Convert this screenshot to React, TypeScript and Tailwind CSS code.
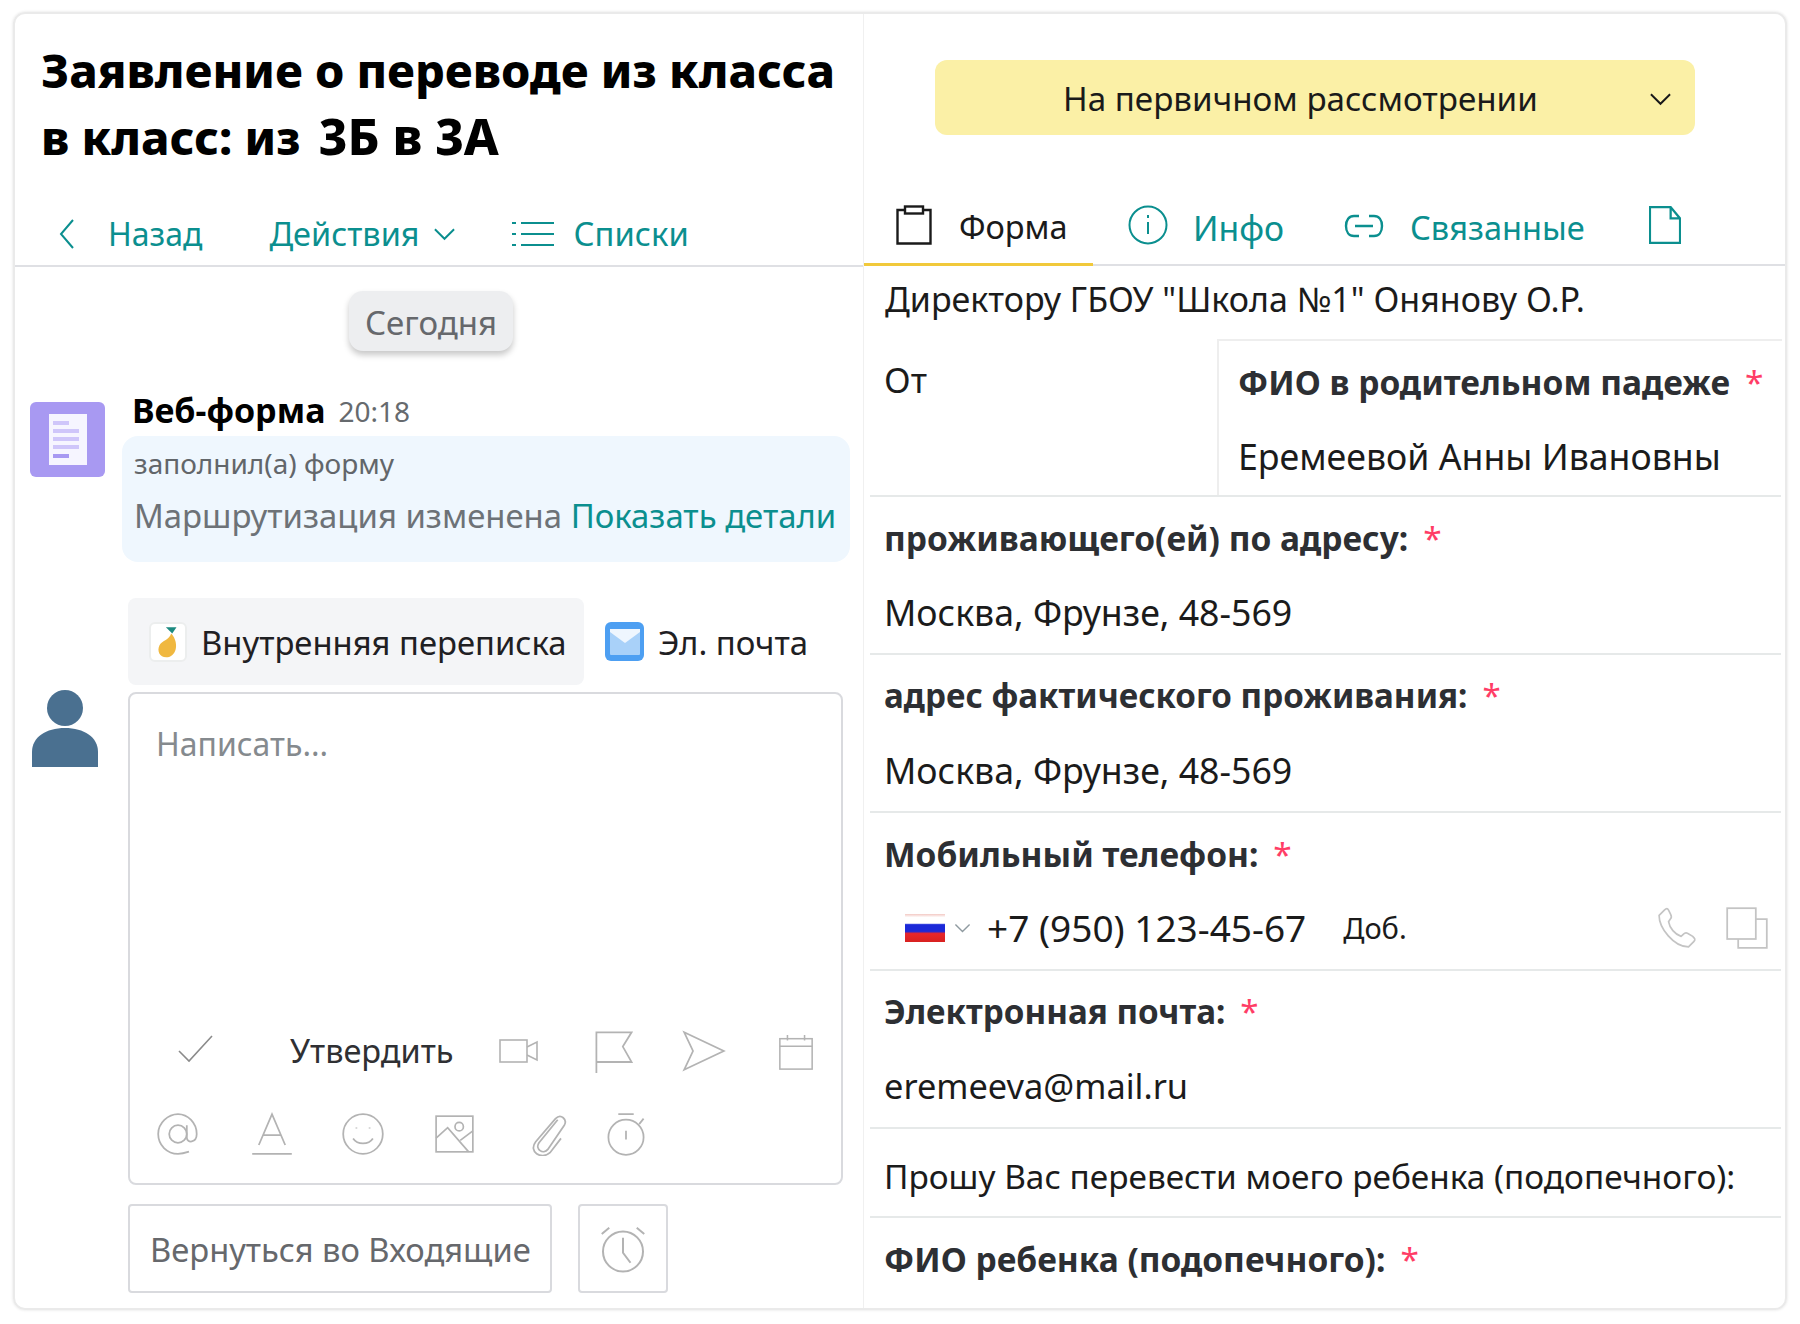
const font = "font-['Noto_Sans','Liberation_Sans',sans-serif]";

function Icon({ className, children }: { className: string; children: React.ReactNode }) {
  return (
    <svg
      viewBox="0 0 40 40"
      fill="none"
      stroke="currentColor"
      strokeWidth={1.6}
      className={`shrink-0 ${className}`}
    >
      {children}
    </svg>
  );
}

function Chevron({ className }: { className: string }) {
  return (
    <svg viewBox="0 0 24 14" fill="none" stroke="currentColor" strokeWidth={2} className={`shrink-0 ${className}`}>
      <path d="M2 2l10 10L22 2" />
    </svg>
  );
}

function Field({
  label,
  value,
  labelSize = "text-[33.5px]",
  valueSize = "text-[35.7px]",
}: {
  label: string;
  value: string;
  labelSize?: string;
  valueSize?: string;
}) {
  return (
    <div className="h-[158px] border-b-2 border-[#e6e9e9] pl-[14px] pr-[13px] flex flex-col">
      <Label text={label} size={labelSize} />
      <div className={`mt-[26px] leading-[48px] text-[#1b1b1b] ${valueSize}`}>{value}</div>
    </div>
  );
}

function Label({ text, size = "text-[33.5px]" }: { text: string; size?: string }) {
  return (
    <div className={`mt-[17px] h-[48px] flex items-start leading-[48px] font-bold text-[#2d2f33] ${size}`}>
      {text}
      <span className="ml-[15px] font-normal text-[#ff3d66]">*</span>
    </div>
  );
}

function LeftPane() {
  return (
    <div className="w-[848px] shrink-0 flex flex-col">
      <h1 className="h-[183px] pt-[23px] pl-[26px] text-[46.9px] leading-[66px] font-extrabold text-black whitespace-nowrap">
        Заявление о переводе из класса
        <br />в класс: из <span className="ml-[6px] text-[49.5px]">3Б в 3А</span>
      </h1>

      <div className="h-[70px] pt-[6px] border-b-2 border-[#dfe0e4] flex items-center text-[32px] text-[#0b8f8f] pl-[44px]">
        <svg viewBox="0 0 16 30" fill="none" stroke="currentColor" strokeWidth={2} className="w-[16px] h-[30px] shrink-0">
          <path d="M14 1L2 15l12 14" />
        </svg>
        <span className="ml-[33px]">Назад</span>
        <span className="ml-[67px] text-[32.5px]">Действия</span>
        <Chevron className="w-[23px] h-[14px] ml-[13px]" />
        <svg viewBox="0 0 42 28" fill="none" stroke="currentColor" strokeWidth={2} className="w-[42px] h-[28px] ml-[56px] shrink-0">
          <path d="M0 3h4M0 14h4M0 25h4M9 3h33M9 14h33M9 25h33" />
        </svg>
        <span className="ml-[20px] text-[32.8px]">Списки</span>
      </div>

      <div className="flex justify-center mt-[24px] pr-[16px]">
        <div className="h-[60px] px-[16px] pt-[3px] flex items-center rounded-[14px] bg-[#edeef0] text-[33px] text-[#66686c] shadow-[0_4px_6px_rgba(0,0,0,0.22)]">
          Сегодня
        </div>
      </div>

      <div className="flex mt-[51px] pl-[15px]">
        <svg viewBox="0 0 75 75" className="w-[75px] h-[75px] shrink-0">
          <rect width="75" height="75" rx="6" fill="#a899f2" />
          <rect x="19" y="12" width="38" height="51" fill="#f6f5ff" />
          <rect x="23" y="19" width="16" height="4" fill="#cfc6fa" />
          <rect x="23" y="27" width="26" height="4" fill="#cfc6fa" />
          <rect x="23" y="35" width="26" height="4" fill="#cfc6fa" />
          <rect x="23" y="43" width="26" height="4" fill="#cfc6fa" />
          <rect x="23" y="52" width="16" height="4" fill="#a899f2" />
        </svg>
        <div className="ml-[17px] w-[728px]">
          <div className="h-[17px] mb-[17px] flex items-center pl-[10px]">
            <span className="text-[34px] font-bold text-black">Веб-форма</span>
            <span className="ml-[13px] text-[28px] text-[#666a6e]">20:18</span>
          </div>
          <div className="h-[126px] rounded-[16px] bg-[#eff7fe] pl-[12px] pt-[7px]">
            <div className="text-[28px] leading-[40px] text-[#62666a]">заполнил(а) форму</div>
            <div className="mt-[9px] text-[32.9px] leading-[48px] text-[#6d7277] whitespace-nowrap">
              Маршрутизация изменена <span className="text-[#0b8f8f]">Показать детали</span>
            </div>
          </div>
        </div>
      </div>

      <div className="flex mt-[36px] pl-[17px]">
        <div className="w-[66px] h-[77px] mt-[92px] shrink-0">
          <svg viewBox="0 0 66 77" className="w-[66px] h-[77px]">
            <ellipse cx="33" cy="18" rx="18" ry="18" fill="#4a7090" />
            <path d="M0 77V62C0 47 14 38 33 38s33 9 33 24v15z" fill="#4a7090" />
          </svg>
        </div>
        <div className="ml-[30px] w-[715px]">
          <div className="flex items-center h-[87px]">
            <div className="w-[456px] h-[87px] rounded-[8px] bg-[#f4f5f7] flex items-center pl-[21px]">
              <div className="w-[38px] h-[40px] rounded-[6px] border-2 border-[#eceeee] bg-white flex items-center justify-center">
                <svg viewBox="0 0 24 32" className="w-[26px] h-[34px]">
                  <path d="M15 8c6 6 7 19-2 22C5 32 1 25 4 19c2-4 9-5 11-11z" fill="#f0b840" />
                  <path d="M10 2h10l-4 6z" fill="#1c8a80" />
                </svg>
              </div>
              <span className="ml-[14px] pt-[2px] text-[32.8px] text-[#1f2023] whitespace-nowrap">Внутренняя переписка</span>
            </div>
            <div className="ml-[21px] w-[39px] h-[39px] rounded-[6px] bg-[#4d9ff2] flex items-center justify-center">
              <svg viewBox="0 0 30 26" className="w-[30px] h-[26px]">
                <rect width="30" height="26" rx="1" fill="#a9d1f9" />
                <path d="M0 0h30v3L15 14 0 3z" fill="#eff6fe" />
              </svg>
            </div>
            <span className="ml-[14px] pt-[2px] text-[33px] text-[#1f2023] whitespace-nowrap">Эл. почта</span>
          </div>

          <div className="mt-[7px] h-[493px] border-2 border-[#d9dade] rounded-[8px] flex flex-col pl-[26px]">
            <div className="mt-[26px] h-[48px] text-[32px] leading-[48px] text-[#858a8e]">Написать...</div>
            <div className="mt-[260px] flex items-center h-[46px] text-[#b3b3b3]">
              <Icon className="w-[40px] h-[40px] ml-[20px] text-[#8b8b8b]">
                <path d="M3 20l10 10L36 5" />
              </Icon>
              <span className="ml-[74px] w-[162px] text-[32.5px] text-[#2f3033] whitespace-nowrap">Утвердить</span>
              <Icon className="w-[46px] h-[40px] ml-[44px]">
                <rect x="1" y="9" width="27" height="22" />
                <path d="M28 16l10-5v18l-10-5" />
              </Icon>
              <Icon className="w-[44px] h-[44px] ml-[50px]">
                <path d="M4 40V3h32l-8 13 8 14H4" />
              </Icon>
              <Icon className="w-[44px] h-[44px] ml-[46px]">
                <path d="M2 3l36 17L2 37l8-17z" />
              </Icon>
              <Icon className="w-[42px] h-[38px] ml-[49px] mt-[2px]">
                <rect x="3" y="6" width="34" height="32" />
                <path d="M3 14h34M11 2v6M29 2v6" />
              </Icon>
            </div>
            <div className="mt-[37px] flex items-center h-[46px] text-[#b3b3b3]">
              <Icon className="w-[44px] h-[44px]">
                <circle cx="20" cy="20" r="8" />
                <path d="M28 12v11c0 6 9 5 9-3 0-10-8-18-17-18S2 10 2 20s8 18 18 18c4 0 7-1 10-2" />
              </Icon>
              <Icon className="w-[44px] h-[44px] ml-[50px]">
                <path d="M8 30L20 2l12 28M12 21h16M2 38h36" />
              </Icon>
              <Icon className="w-[44px] h-[44px] ml-[47px]">
                <circle cx="20" cy="20" r="18" />
                <path d="M11 24c4 6 14 6 18 0M14 14v1M26 14v1" />
              </Icon>
              <Icon className="w-[42px] h-[44px] ml-[49px]">
                <rect x="2" y="3" width="35" height="34" />
                <circle cx="24" cy="13" r="4" />
                <path d="M2 24l11-10 20 23M25 26l12-9" />
              </Icon>
              <Icon className="w-[44px] h-[44px] ml-[52px]">
                <path d="M27 7L10 28c-4 6 4 11 8 6L33 12c3-5-3-11-8-6L7 27c-7 9 5 17 13 10l10-13" />
              </Icon>
              <Icon className="w-[44px] h-[44px] ml-[32px]">
                <circle cx="20" cy="23" r="16" />
                <path d="M13 2h14M20 17v8M32 11l4-5" />
              </Icon>
            </div>
          </div>

          <div className="flex mt-[19px]">
            <div className="w-[424px] h-[89px] pt-[2px] border-2 border-[#d9dade] rounded-[4px] flex items-center pl-[20px] text-[32.7px] text-[#66686c] whitespace-nowrap">
              Вернуться во Входящие
            </div>
            <div className="ml-[26px] w-[90px] h-[89px] border-2 border-[#d9dade] rounded-[4px] flex items-center justify-center text-[#b3b3b3]">
              <Icon className="w-[50px] h-[50px]">
                <circle cx="20" cy="22" r="16" />
                <path d="M20 11v12l6 8M3 8l6-5M37 8l-6-5" />
              </Icon>
            </div>
          </div>
        </div>
      </div>
    </div>
  );
}

function RightPane() {
  return (
    <div className="flex-1 min-w-0 border-l border-[#f0f0f0] flex flex-col">
      <div className="h-[183px] flex items-start pl-[71px] pt-[46px]">
        <div className="w-[760px] h-[75px] pt-[3px] rounded-[12px] bg-[#fbf0a6] flex items-center text-[33.2px] text-[#1a1a1a]">
          <span className="ml-[128px]">На первичном рассмотрении</span>
          <Chevron className="w-[23px] h-[14px] ml-auto mr-[23px]" />
        </div>
      </div>

      <div className="h-[70px] border-b-2 border-[#dfe0e4] flex text-[33px] text-[#0b8f8f] -mt-[1px]">
        <div className="w-[229px] h-[70px] border-b-[3px] border-[#f1c93b] flex items-center text-[#1a1a1a] pl-[32px] -mb-[1px]">
          <svg viewBox="0 0 36 40" fill="none" stroke="currentColor" strokeWidth={2.4} className="w-[36px] h-[40px] -mt-[10px] shrink-0">
            <path d="M9 5H1.5v33.5h33V5H27" />
            <rect x="9" y="1.5" width="18" height="7" />
          </svg>
          <span className="ml-[27px] -mt-[4px] text-[32.5px]">Форма</span>
        </div>
        <div className="flex items-center pl-[35px] -mt-[4px]">
          <svg viewBox="0 0 40 40" fill="none" stroke="currentColor" strokeWidth={2} className="w-[40px] h-[40px] -mt-[6px] shrink-0">
            <circle cx="20" cy="20" r="18.5" />
            <path d="M20 17v12M20 10v3" />
          </svg>
          <span className="ml-[25px] text-[33.7px]">Инфо</span>
          <svg viewBox="0 0 40 24" fill="none" stroke="currentColor" strokeWidth={2.4} className="w-[40px] h-[24px] ml-[60px] -mt-[4px] shrink-0">
            <path d="M15 2H10C5 2 2 6 2 12s3 10 8 10h5M25 2h5c5 0 8 4 8 10s-3 10-8 10h-5M11 12h18" />
          </svg>
          <span className="ml-[26px] text-[32.6px]">Связанные</span>
          <svg viewBox="0 0 34 40" fill="none" stroke="currentColor" strokeWidth={2.4} className="w-[32px] h-[38px] ml-[64px] -mt-[6px] shrink-0">
            <path d="M1 1h22l10 12v26H1zM23 1v12h10" />
          </svg>
        </div>
      </div>

      <div className="h-[73px] pl-[21px] pt-[9px] text-[34px] leading-[48px] text-[#1b1b1b] whitespace-nowrap">
        Директору ГБОУ "Школа №1" Онянову О.Р.
      </div>

      <div className="ml-[6px] mr-[4px]">
        <div className="h-[158px] border-b-2 border-[#e6e9e9] flex">
          <div className="w-[347px] pl-[14px] pt-[17px] text-[35px] leading-[48px] text-[#1b1b1b]">От</div>
          <div className="flex-1 border-l-2 border-t-2 border-[#eeeeee] pl-[19px] -mr-[1px]">
            <Label text="ФИО в родительном падеже" />
            <div className="mt-[26px] text-[35.7px] leading-[48px] text-[#1b1b1b]">Еремеевой Анны Ивановны</div>
          </div>
        </div>
        <Field label="проживающего(ей) по адресу:" value="Москва, Фрунзе, 48-569" />
        <Field label="адрес фактического проживания:" labelSize="text-[33.2px]" value="Москва, Фрунзе, 48-569" />

        <div className="h-[158px] border-b-2 border-[#e6e9e9] pl-[14px] pr-[13px] flex flex-col">
          <Label text="Мобильный телефон:" />
          <div className="mt-[26px] h-[48px] flex items-center text-[37px] text-[#1b1b1b] whitespace-nowrap">
            <div className="ml-[21px] w-[40px] h-[28px] bg-[linear-gradient(#f3c9c4_0%,#ffffff_12%,#ffffff_33%,#1b29d8_38%,#1b29d8_62%,#e8262b_70%,#d8211f_100%)]" />
            <Chevron className="w-[17px] h-[10px] ml-[9px] text-[#8f9aa0]" />
            <span className="ml-[16px]">+7 (950) 123-45-67</span>
            <span className="ml-[37px] text-[29px]">Доб.</span>
            <div className="ml-auto flex items-center text-[#c4c4c4]">
              <Icon className="w-[44px] h-[42px]">
                <path d="M7 3L2 8c0 12 14 30 28 30l5-5c2-2 1-3-1-5l-5-3c-2-1-3 0-4 1l-2 2C17 26 12 20 11 14l2-3c1-1 1-2 0-4L11 3C10 1 9 1 7 3z" />
              </Icon>
              <Icon className="w-[44px] h-[44px] ml-[25px] -mr-[1px]">
                <rect x="2" y="2" width="26" height="28" />
                <path d="M28 12h10v26H12v-8" />
              </Icon>
            </div>
          </div>
        </div>

        <Field
          label="Электронная почта:"
          labelSize="text-[33.2px]"
          value="eremeeva@mail.ru"
          valueSize="text-[34.4px]"
        />

        <div className="h-[89px] border-b-2 border-[#e6e9e9] pl-[14px] pt-[23px] text-[33.4px] leading-[48px] text-[#1b1b1b] whitespace-nowrap">
          Прошу Вас перевести моего ребенка (подопечного):
        </div>
        <div className="pl-[14px] pr-[13px]">
          <Label text="ФИО ребенка (подопечного):" />
        </div>
      </div>
    </div>
  );
}

export default function App() {
  return (
    <div className={`${font} w-[1800px] h-[1324px] bg-white pt-[12px] pl-[13px]`}>
      <div className="w-[1774px] h-[1298px] rounded-[12px] border-2 border-[#eaeaea] shadow-[0_0_3px_rgba(0,0,0,0.12)] flex overflow-hidden">
        <LeftPane />
        <RightPane />
      </div>
    </div>
  );
}
